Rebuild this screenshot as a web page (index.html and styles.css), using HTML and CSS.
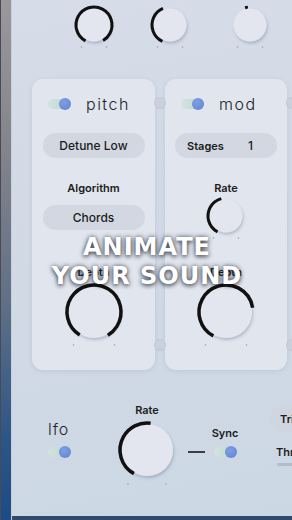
FILE: index.html
```html
<!DOCTYPE html>
<html>
<head>
<meta charset="utf-8">
<link rel="stylesheet" href="styles.css">
</head>
<body>
<div class="app">
  <div class="rail"></div>
  <main class="main">
    <div class="top-knobs">
      <svg class="knob-s" viewBox="0 0 44 48" width="44" height="48">
        <defs>
          <filter id="sh" x="-40%" y="-40%" width="180%" height="180%">
            <feDropShadow dx="1" dy="2" stdDeviation="1.6" flood-color="#5a6a85" flood-opacity=".35"/>
          </filter>
        </defs>
        <circle cx="22" cy="21" r="16.5" fill="#e3e6ef" filter="url(#sh)"/>
        <circle cx="22" cy="21" r="18" fill="none" stroke="#111" stroke-width="3" stroke-dasharray="94.2 300" transform="rotate(118 22 21)"/>
        <circle cx="9.5" cy="43" r=".8" fill="#9aa4b2"/><circle cx="34.5" cy="43" r=".8" fill="#9aa4b2"/>
      </svg>
      <svg class="knob-s" viewBox="0 0 44 48" width="44" height="48">
        <circle cx="22" cy="21" r="16.5" fill="#e3e6ef" filter="url(#sh)"/>
        <circle cx="22" cy="21" r="18" fill="none" stroke="#111" stroke-width="3" stroke-dasharray="41.2 300" transform="rotate(115 22 21)"/>
        <circle cx="9.5" cy="43" r=".8" fill="#9aa4b2"/><circle cx="34.5" cy="43" r=".8" fill="#9aa4b2"/>
      </svg>
      <svg class="knob-s k3" viewBox="0 0 44 48" width="44" height="48">
        <circle cx="22" cy="21" r="16.5" fill="#e3e6ef" filter="url(#sh)"/>
        <circle cx="22" cy="21" r="18" fill="none" stroke="#111" stroke-width="3" stroke-dasharray="3 300" transform="rotate(254 22 21)"/>
        <circle cx="9.5" cy="43" r=".8" fill="#9aa4b2"/><circle cx="34.5" cy="43" r=".8" fill="#9aa4b2"/>
      </svg>
    </div>

    <div class="panels">
      <section class="panel panel-pitch">
        <header class="panel-head"><span class="toggle"></span><h2 class="panel-title">pitch</h2></header>
        <div class="pill">Detune Low</div>
        <div class="label">Algorithm</div>
        <div class="pill pill-algo">Chords</div>
        <div class="label label-depth">Depth</div>
        <svg class="knob-b" viewBox="0 0 66 68" width="66" height="68">
          <circle cx="33" cy="30" r="26" fill="#e3e6ef" filter="url(#sh)"/>
          <circle cx="33" cy="30" r="27" fill="none" stroke="#111" stroke-width="3.5" stroke-dasharray="139.5 300" transform="rotate(122 33 30)"/>
          <circle cx="12.5" cy="63" r=".8" fill="#9aa4b2"/><circle cx="53.5" cy="63" r=".8" fill="#9aa4b2"/>
        </svg>
      </section>
      <section class="panel panel-mod">
        <header class="panel-head"><span class="toggle"></span><h2 class="panel-title">mod</h2></header>
        <div class="pill pill-stages"><span class="pill-key">Stages</span><span>1</span></div>
        <div class="label">Rate</div>
        <svg class="knob-s" viewBox="0 0 44 48" width="44" height="48">
          <circle cx="22" cy="21" r="16.5" fill="#e3e6ef" filter="url(#sh)"/>
          <circle cx="22" cy="21" r="18" fill="none" stroke="#111" stroke-width="3" stroke-dasharray="42.7 300" transform="rotate(118 22 21)"/>
          <circle cx="9.5" cy="43" r=".8" fill="#9aa4b2"/><circle cx="34.5" cy="43" r=".8" fill="#9aa4b2"/>
        </svg>
        <div class="label label-depth">Depth</div>
        <svg class="knob-b" viewBox="0 0 66 68" width="66" height="68">
          <circle cx="33" cy="30" r="26" fill="#e3e6ef" filter="url(#sh)"/>
          <circle cx="33" cy="30" r="27" fill="none" stroke="#111" stroke-width="3.5" stroke-dasharray="109.3 300" transform="rotate(118 33 30)"/>
          <circle cx="12.5" cy="63" r=".8" fill="#9aa4b2"/><circle cx="53.5" cy="63" r=".8" fill="#9aa4b2"/>
        </svg>
      </section>
    </div>

    <div class="lfo">
      <div class="lfo-title-col">
        <h2 class="lfo-title">lfo</h2>
        <span class="toggle lfo-toggle"></span>
      </div>
      <div class="rate-col">
        <div class="label">Rate</div>
        <svg class="knob-b" viewBox="0 0 66 68" width="66" height="68">
          <circle cx="33" cy="30" r="26" fill="#e3e6ef" filter="url(#sh)"/>
          <circle cx="33" cy="30" r="27" fill="none" stroke="#111" stroke-width="3.5" stroke-dasharray="74.5 300" transform="rotate(119 33 30)"/>
          <circle cx="14" cy="64" r=".8" fill="#9aa4b2"/><circle cx="52" cy="64" r=".8" fill="#9aa4b2"/>
        </svg>
      </div>
      <span class="dash"></span>
      <div class="sync-col">
        <div class="label">Sync</div>
        <span class="toggle sync-toggle"></span>
      </div>
      <div class="wave-col">
        <div class="wave-pill">Tri</div>
        <div class="thr">Thr</div>
        <div class="thr-bar"></div>
      </div>
    </div>
  </main>
  <div class="overlay">ANIMATE<br>YOUR SOUND</div>
</div>
</body>
</html>
```

FILE: styles.css
```css
* { box-sizing: border-box; margin: 0; padding: 0; }
html, body { width: 292px; height: 520px; overflow: hidden; }
body {
  font-family: Inter, "Noto Sans", sans-serif;
  color: #1b1c20;
  background: #1f4a7c;
}
.app { position: relative; display: flex; width: 292px; height: 520px; }

.rail {
  width: 12px;
  flex: none;
  background: linear-gradient(180deg, #9a989d 0%, #84848c 28%, #607086 58%, #2d5687 84%, #1c4b86 100%);
  border-left: 1px solid #4a4a52;
  border-right: 1px solid #c7cfdb;
}

.main {
  flex: 1;
  display: flex;
  flex-direction: column;
  background: linear-gradient(170deg, #d6dce8 0%, #d1d9e5 55%, #cbd8e4 100%);
  border-bottom: 4px solid #2d4b6b;
  overflow: hidden;
}

/* top row */
.top-knobs {
  display: flex;
  gap: 32px;
  height: 52px;
  padding: 4px 0 0 60px;
  flex: none;
}
.knob-s, .knob-b { display: block; flex: none; overflow: visible; }
.k3 { margin-left: 4px; }

/* panels */
.panels {
  display: flex;
  gap: 10px;
  margin-top: 27px;
  padding-left: 20px;
  flex: none;
}
.panel {
  position: relative;
  width: 123px;
  height: 291px;
  flex: none;
  background: #e1e5ee;
  border-radius: 11px;
  box-shadow: 0 1px 4px rgba(90, 110, 140, .16);
  display: flex;
  flex-direction: column;
  align-items: center;
  padding-top: 15px;
}
.panel-mod { width: 122px; }
.panel::before, .panel::after {
  content: "";
  position: absolute;
  right: -11px;
  width: 12px;
  height: 12px;
  border-radius: 50%;
  background: #cad1dc;
  box-shadow: inset 0 0 2px rgba(60, 70, 90, .12);
  z-index: 1;
}
.panel::before { top: 18px; }
.panel::after { top: 260px; }

.panel-head {
  align-self: flex-start;
  display: flex;
  align-items: center;
  gap: 15px;
  height: 20px;
  padding-left: 16px;
}
.panel-title {
  font-weight: 300;
  font-size: 16px;
  line-height: 20px;
  letter-spacing: 1.5px;
  color: #222329;
}

.toggle {
  display: flex;
  align-items: center;
  justify-content: flex-end;
  width: 23px;
  height: 10px;
  border-radius: 5px;
  background: linear-gradient(90deg, #d3e3de, #bcd5cf);
  flex: none;
}
.toggle::after {
  content: "";
  width: 12px;
  height: 12px;
  border-radius: 50%;
  background: radial-gradient(circle at 40% 35%, #7f9ee2, #5f82d2);
  flex: none;
}

.pill {
  width: 102px;
  height: 25px;
  border-radius: 13px;
  background: #d2d7e1;
  display: flex;
  align-items: center;
  justify-content: center;
  font-size: 12px;
  font-weight: 500;
  margin-top: 19px;
}
.pill-algo { margin-top: 10px; }
.pill-stages {
  justify-content: space-between;
  padding: 0 24px 0 12px;
}
.pill-key { font-size: 11px; font-weight: 600; }

.label {
  font-size: 11px;
  font-weight: 600;
  line-height: 14px;
  margin-top: 23px;
}
.label-depth { margin-top: 35px; }
.panel-mod .label-depth { margin-top: 22px; }
.panel .knob-b { margin-top: 3px; }

/* lfo row */
.lfo {
  display: flex;
  align-items: flex-start;
  padding-left: 36px;
  flex: none;
}
.lfo-title-col { margin-top: 49px; display: flex; flex-direction: column; flex: none; }
.lfo-title {
  font-weight: 300;
  font-size: 16px;
  line-height: 20px;
  letter-spacing: 1px;
  color: #222329;
}
.lfo-toggle { margin-top: 8px; }

.rate-col {
  margin: 33px 0 0 43px;
  width: 66px;
  flex: none;
  display: flex;
  flex-direction: column;
  align-items: center;
}
.rate-col .label { margin-top: 0; }
.rate-col .knob-b { margin-top: 3px; }

.dash {
  width: 17px;
  height: 1.5px;
  background: #3a3d45;
  margin: 81px 0 0 8px;
  flex: none;
}
.sync-col {
  margin: 56px 0 0 8px;
  width: 24px;
  flex: none;
  display: flex;
  flex-direction: column;
  align-items: center;
}
.sync-col .label { margin-top: 0; }
.sync-toggle { margin-top: 7px; }

.wave-col {
  margin: 35px 0 0 33px;
  flex: none;
  display: flex;
  flex-direction: column;
}
.wave-pill {
  width: 44px;
  height: 27px;
  border-radius: 14px;
  background: #d0d6e0;
  display: flex;
  align-items: center;
  padding-left: 10px;
  font-size: 11px;
  font-weight: 600;
}
.thr {
  margin: 13px 0 0 6px;
  font-size: 11px;
  font-weight: 600;
  line-height: 14px;
}
.thr-bar {
  margin: 4px 0 0 7px;
  width: 20px;
  height: 3px;
  border-radius: 2px;
  background: #b5bcc8;
}

/* overlay caption */
.overlay {
  position: absolute;
  left: 2px;
  right: 0;
  top: 233px;
  text-align: center;
  font-family: "DejaVu Sans", sans-serif;
  font-weight: 700;
  font-size: 24px;
  line-height: 29px;
  letter-spacing: 1px;
  color: #fff;
  text-shadow: 0 0 5px rgba(30, 38, 55, .75), 0 2px 4px rgba(0, 0, 0, .45);
  z-index: 5;
}
```
